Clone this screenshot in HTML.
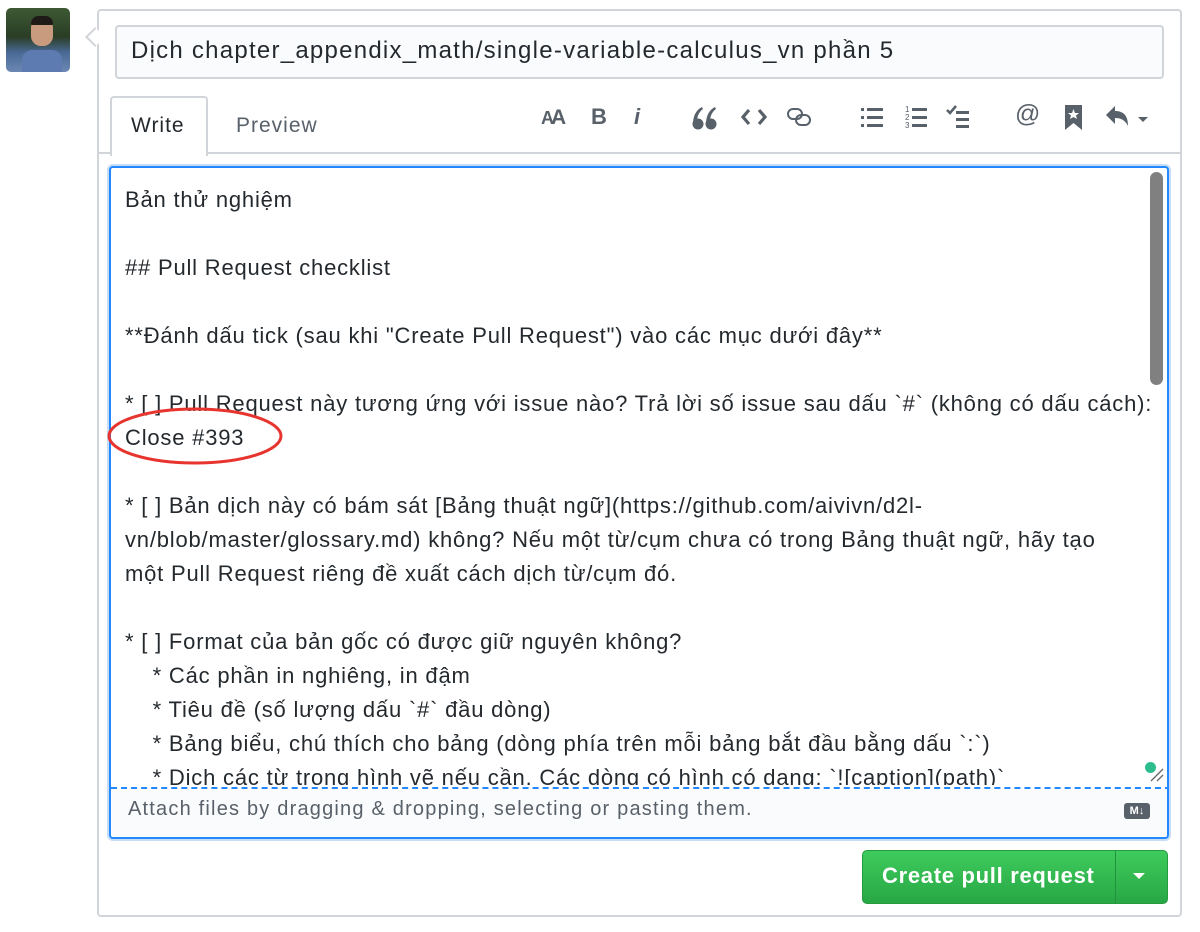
<!DOCTYPE html>
<html><head><meta charset="utf-8"><style>
*{box-sizing:border-box;margin:0;padding:0}
body{width:1200px;height:932px;background:#fff;position:relative;overflow:hidden;font-family:"Liberation Sans",Arial,sans-serif;color:#24292e}
.abs{position:absolute}
.line{position:absolute;left:125px;font-size:22px;letter-spacing:0.8px;white-space:nowrap;color:#24292e;line-height:24px}
.ic{position:absolute;top:104px;color:#586069}
</style></head><body>
<div class="abs" style="left:6px;top:8px;width:64px;height:64px;border-radius:5px;background:linear-gradient(180deg,#3d5a34 0%,#2a3d25 45%,#4a6a96 70%,#6b88b3 100%);overflow:hidden">
 <div class="abs" style="left:25px;top:10px;width:22px;height:28px;border-radius:10px;background:#c89b7e"></div>
 <div class="abs" style="left:25px;top:8px;width:22px;height:9px;border-radius:10px 10px 2px 2px;background:#1d1a18"></div>
 <div class="abs" style="left:16px;top:42px;width:40px;height:30px;border-radius:10px 10px 0 0;background:#5d7bb0"></div>
</div>
<div class="abs" style="left:97px;top:9px;width:1085px;height:908px;border:2px solid #d1d5da;border-radius:4px"></div>
<div class="abs" style="left:88px;top:30px;width:14px;height:14px;background:#fff;border-left:2px solid #d1d5da;border-bottom:2px solid #d1d5da;transform:rotate(45deg)"></div>
<div class="abs" style="left:115px;top:25px;width:1049px;height:54px;border:2px solid #d1d5da;border-radius:4px;background:#fafbfc"></div>
<div class="abs" style="left:131px;top:37px;font-size:24px;letter-spacing:1.25px;color:#24292e;white-space:nowrap">Dịch chapter_appendix_math/single-variable-calculus_vn phần 5</div>
<div class="abs" style="left:99px;top:152px;width:1081px;height:2px;background:#d1d5da"></div>
<div class="abs" style="left:110px;top:96px;width:98px;height:60px;border:2px solid #d1d5da;border-bottom:none;border-radius:4px 4px 0 0;background:#fff"></div>
<div class="abs" style="left:131px;top:114px;font-size:21px;letter-spacing:1px;color:#24292e">Write</div>
<div class="abs" style="left:236px;top:114px;font-size:21px;letter-spacing:1px;color:#586069">Preview</div>
<!-- toolbar -->
<div class="ic" style="left:541px;font-size:21px;font-weight:bold;letter-spacing:-3px;top:106px"><span style="font-size:18px">A</span>A</div>
<div class="ic" style="left:591px;font-size:22px;font-weight:bold;top:104px">B</div>
<div class="ic" style="left:634px;font-size:22px;font-style:italic;font-weight:bold;top:104px">i</div>
<svg class="abs" style="left:692px;top:106px" width="28" height="26"><g fill="#586069"><circle cx="6" cy="18" r="5.5"/><path d="M1 18 C1 10 4 4 10 1 L11 3 C7 6 5 10 5 16 Z"/><circle cx="19" cy="18" r="5.5"/><path d="M14 18 C14 10 17 4 23 1 L24 3 C20 6 18 10 18 16 Z"/></g></svg>
<svg class="abs" style="left:740px;top:106px" width="28" height="22"><path d="M9 4 L3 11 L9 18 M19 4 L25 11 L19 18" stroke="#586069" stroke-width="3.2" fill="none"/></svg>
<svg class="abs" style="left:786px;top:106px" width="28" height="22"><rect x="2" y="3" width="14" height="10" rx="5" stroke="#586069" stroke-width="2" fill="none"/><rect x="10" y="9" width="14" height="10" rx="5" stroke="#586069" stroke-width="2" fill="none"/></svg>
<svg class="abs" style="left:860px;top:106px" width="26" height="24"><g fill="#586069"><rect x="1" y="2" width="3" height="3"/><rect x="1" y="10" width="3" height="3"/><rect x="1" y="18" width="3" height="3"/><rect x="7" y="2" width="16" height="3"/><rect x="7" y="10" width="16" height="3"/><rect x="7" y="18" width="16" height="3"/></g></svg>
<svg class="abs" style="left:905px;top:104px" width="26" height="26"><g fill="#586069"><text x="0" y="8" font-size="8" font-family="Liberation Sans">1</text><text x="0" y="16" font-size="8" font-family="Liberation Sans">2</text><text x="0" y="24" font-size="8" font-family="Liberation Sans">3</text><rect x="7" y="4" width="15" height="3"/><rect x="7" y="12" width="15" height="3"/><rect x="7" y="20" width="15" height="3"/></g></svg>
<svg class="abs" style="left:946px;top:104px" width="28" height="26"><path d="M1 6 L4 9 L10 2" stroke="#586069" stroke-width="2.5" fill="none"/><g fill="#586069"><rect x="10" y="7" width="13" height="3"/><rect x="10" y="14" width="13" height="3"/><rect x="10" y="21" width="13" height="3"/></g></svg>
<div class="ic" style="left:1015px;font-size:25px;top:100px">@</div>
<svg class="abs" style="left:1064px;top:104px" width="20" height="28"><path d="M1 1 H18 V26 L9.5 19 L1 26 Z" fill="#586069"/><path d="M9.5 5 L11 9 L15 9 L12 11.5 L13 15 L9.5 13 L6 15 L7 11.5 L4 9 L8 9 Z" fill="#fff"/></svg>
<svg class="abs" style="left:1104px;top:104px" width="46" height="26"><path d="M2 11 L11 2 V7 C20 7 24 12 24 22 C21 16 17 14 11 14 V20 Z" fill="#586069"/><path d="M34 13 H44 L39 18 Z" fill="#586069"/></svg>
<!-- textarea -->
<div class="abs" style="left:107px;top:164px;width:1064px;height:677px;border:3px solid #c6dcf7;border-radius:6px"></div>
<div class="abs" style="left:109px;top:166px;width:1060px;height:673px;border:2px solid #2188ff;border-radius:4px;background:#fff;overflow:hidden">
 <div class="abs" style="left:0;top:620px;width:1060px;height:55px;background:#fafbfc"></div>
 <div class="abs" style="left:0;top:619px;width:1060px;height:0;border-top:2px dashed #2188ff"></div>
</div>
<div class="abs" style="left:111px;top:168px;width:1040px;height:617px;overflow:hidden">
<div class="line" style="left:14px;top:20px">Bản thử nghiệm</div>
<div class="line" style="left:14px;top:88px">## Pull Request checklist</div>
<div class="line" style="left:14px;top:156px">**Đánh dấu tick (sau khi "Create Pull Request") vào các mục dưới đây**</div>
<div class="line" style="left:14px;top:224px">* [ ] Pull Request này tương ứng với issue nào? Trả lời số issue sau dấu `#` (không có dấu cách):</div>
<div class="line" style="left:14px;top:258px">Close #393</div>
<div class="line" style="left:14px;top:326px">* [ ] Bản dịch này có bám sát [Bảng thuật ngữ](https://github.com/aivivn/d2l-</div>
<div class="line" style="left:14px;top:360px">vn/blob/master/glossary.md) không? Nếu một từ/cụm chưa có trong Bảng thuật ngữ, hãy tạo</div>
<div class="line" style="left:14px;top:394px">một Pull Request riêng đề xuất cách dịch từ/cụm đó.</div>
<div class="line" style="left:14px;top:462px">* [ ] Format của bản gốc có được giữ nguyên không?</div>
<div class="line" style="left:14px;top:496px">&nbsp;&nbsp;&nbsp;&nbsp;* Các phần in nghiêng, in đậm</div>
<div class="line" style="left:14px;top:530px">&nbsp;&nbsp;&nbsp;&nbsp;* Tiêu đề (số lượng dấu `#` đầu dòng)</div>
<div class="line" style="left:14px;top:564px">&nbsp;&nbsp;&nbsp;&nbsp;* Bảng biểu, chú thích cho bảng (dòng phía trên mỗi bảng bắt đầu bằng dấu `:`)</div>
<div class="line" style="left:14px;top:598px">&nbsp;&nbsp;&nbsp;&nbsp;* Dịch các từ trong hình vẽ nếu cần. Các dòng có hình có dạng: `![caption](path)`</div>
</div>
<div class="abs" style="left:1150px;top:172px;width:13px;height:213px;border-radius:7px;background:#808080"></div>
<div class="abs" style="left:1145px;top:762px;width:11px;height:11px;border-radius:50%;background:#2bbd8e"></div>
<svg class="abs" style="left:1149px;top:767px" width="16" height="16"><path d="M2 14 L14 2 M8 14 L14 8" stroke="#666" stroke-width="1.3"/></svg>
<div class="abs" style="left:128px;top:798px;font-size:20px;letter-spacing:1.2px;color:#586069;white-space:nowrap">Attach files by dragging &amp; dropping, selecting or pasting them.</div>
<div class="abs" style="left:1124px;top:803px;width:26px;height:16px;border-radius:3px;background:#586069;color:#fff;font-size:11px;font-weight:bold;text-align:center;line-height:16px">M↓</div>
<!-- button -->
<div class="abs" style="left:862px;top:850px;width:306px;height:54px;border:1px solid #259a3f;border-radius:5px;background:linear-gradient(#3ecb5c,#28a745)"></div>
<div class="abs" style="left:1115px;top:851px;width:1px;height:52px;background:#23903c"></div>
<div class="abs" style="left:882px;top:863px;font-size:22px;letter-spacing:0.7px;font-weight:bold;color:#fff;white-space:nowrap">Create pull request</div>
<svg class="abs" style="left:1133px;top:873px" width="14" height="8"><path d="M0 0 H12 L6 6 Z" fill="#fff"/></svg>
<svg class="abs" style="left:0;top:0" width="1200" height="932"><ellipse cx="195" cy="436" rx="86" ry="27" fill="none" stroke="#e8342e" stroke-width="3"/></svg>
</body></html>
